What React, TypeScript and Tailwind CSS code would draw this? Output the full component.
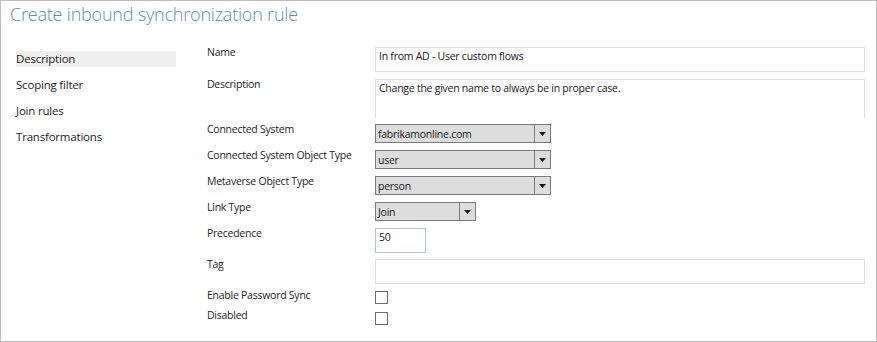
import React from "react";

const navItems = ["Description", "Scoping filter", "Join rules", "Transformations"];

const Arrow = () => (
  <svg width="7" height="4" viewBox="0 0 7 4" className="block">
    <path d="M0 0 H7 L3.5 4 Z" fill="#1a1a1a" />
  </svg>
);

const Select = ({ value, width }: { value: string; width: string }) => (
  <div className={`flex h-[19px] ${width} border border-[#7a7a7a] bg-[#dddddd]`}>
    <div className="flex-1 pl-[2px] pt-[1px] leading-[16px] text-[#1a1a1a]">{value}</div>
    <div className="flex w-[16px] items-center justify-center border-l border-[#7a7a7a]">
      <Arrow />
    </div>
  </div>
);

const Row = ({
  label,
  children,
  className = "",
  labelOffset = "-mt-[3px]",
}: {
  label: string;
  children: React.ReactNode;
  className?: string;
  labelOffset?: string;
}) => (
  <div className={`flex items-start ${className}`}>
    <div className={`${labelOffset} w-[168px] shrink-0 whitespace-nowrap leading-[16px] text-[#1e1e1e]`}>{label}</div>
    {children}
  </div>
);

export default function App() {
  return (
    <div
      className="flex h-[342px] w-[877px] flex-col border border-[#bdbdbd] bg-white"
      style={{ fontFamily: '"Open Sans", "Noto Sans", sans-serif' }}
    >
      <h1 className="pl-[9px] pt-[1px] text-[18px] font-light leading-[24px] tracking-[-0.2px] text-[#5b8dcc]">
        Create inbound synchronization rule
      </h1>

      <div className="flex pl-[15px] pt-[23px]">
        {/* side navigation */}
        <nav className="-mt-[2px] w-[160px] shrink-0 pt-[4px]">
          {navItems.map((item, i) => (
            <div
              key={item}
              className={`mb-[10px] h-[16px] text-[11.5px] leading-[16px] tracking-[-0.2px] text-[#1e1e1e] ${i === 0 ? "bg-[#efefef]" : ""}`}
            >
              {item}
            </div>
          ))}
        </nav>

        {/* form */}
        <div className="-mt-[2px] ml-[31px] flex flex-1 flex-col text-[10.5px] tracking-[-0.25px]">
          <Row label="Name">
            <div className="h-[25px] w-[490px] border border-[#dcdce2] pl-[3px] leading-[16px] text-[#1a1a1a]">
              In from AD - User custom flows
            </div>
          </Row>
          <Row label="Description" className="mt-[7px]">
            <div className="h-[39px] w-[490px] border border-b-0 border-[#dcdce2] pl-[3px] leading-[16px] text-[#1a1a1a]">
              Change the given name to always be in proper case.
            </div>
          </Row>
          <Row label="Connected System" className="mt-[6px]">
            <Select value="fabrikamonline.com" width="w-[176px]" />
          </Row>
          <Row label="Connected System Object Type" className="mt-[7px]">
            <Select value="user" width="w-[176px]" />
          </Row>
          <Row label="Metaverse Object Type" className="mt-[7px]">
            <Select value="person" width="w-[176px]" />
          </Row>
          <Row label="Link Type" className="mt-[7px]">
            <Select value="Join" width="w-[101px]" />
          </Row>
          <Row label="Precedence" className="mt-[7px]">
            <div className="h-[25px] w-[51px] border border-[#a9c6e6] pl-[3px] leading-[16px] text-[#1a1a1a]">
              50
            </div>
          </Row>
          <Row label="Tag" className="mt-[6px]">
            <div className="h-[25px] w-[490px] border border-[#dcdce2]" />
          </Row>
          <Row label="Enable Password Sync" className="mt-[7px]" labelOffset="-mt-[4px]">
            <div className="h-[13px] w-[13px] border border-[#6b6b6b]" />
          </Row>
          <Row label="Disabled" className="mt-[8px]" labelOffset="-mt-[5px]">
            <div className="h-[13px] w-[13px] border border-[#6b6b6b]" />
          </Row>
        </div>
      </div>
    </div>
  );
}
